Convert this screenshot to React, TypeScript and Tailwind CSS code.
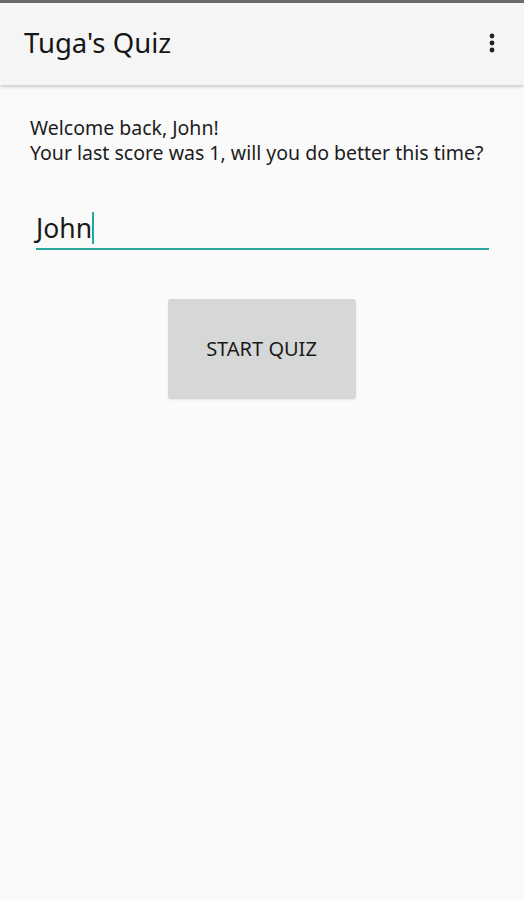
import React from 'react';

export default function App() {
  return (
    <div className="w-[524px] h-[900px] bg-[#fafafa] flex flex-col font-['Noto_Sans','Open_Sans',sans-serif] text-[#1a1a1a]">
      <div className="h-[3px] bg-[#6b6b6b]" />
      <header className="h-[82px] bg-[#f5f5f5] flex items-center justify-between pl-[24px] pr-[29px] shadow-[0_2px_3px_rgba(0,0,0,0.18)] relative z-10">
        <h1 className="text-[27.5px] leading-none text-[#161616] -mt-[2px]">Tuga's Quiz</h1>
        <svg width="6" height="20" viewBox="0 0 6 20" className="-mt-[3px]">
          <circle cx="3" cy="3" r="2.4" fill="#222" />
          <circle cx="3" cy="10" r="2.4" fill="#222" />
          <circle cx="3" cy="17" r="2.4" fill="#222" />
        </svg>
      </header>

      <main className="flex flex-col px-[30px] pt-[30px]">
        <p className="text-[19.5px] leading-[25px] text-[#1c1c1c] whitespace-nowrap">
          Welcome back, John!
          <br />
          Your last score was 1, will you do better this time?
        </p>

        <div className="mt-[46px] ml-[6px] mr-[5px] border-b-2 border-[#26a69a] pb-[3px] flex items-center">
          <span className="text-[26.5px] leading-[34px] text-[#1a1a1a]">John</span>
          <span className="w-[2px] h-[32px] bg-[#26a69a]" />
        </div>

        <div className="flex justify-center mt-[49px] -ml-[1px]">
          <button className="w-[188px] h-[100px] bg-[#d6d7d7] rounded-[3px] text-[20px] text-[#1a1a1a] shadow-[0_1px_2px_rgba(0,0,0,0.08)]">
            START QUIZ
          </button>
        </div>
      </main>
    </div>
  );
}
